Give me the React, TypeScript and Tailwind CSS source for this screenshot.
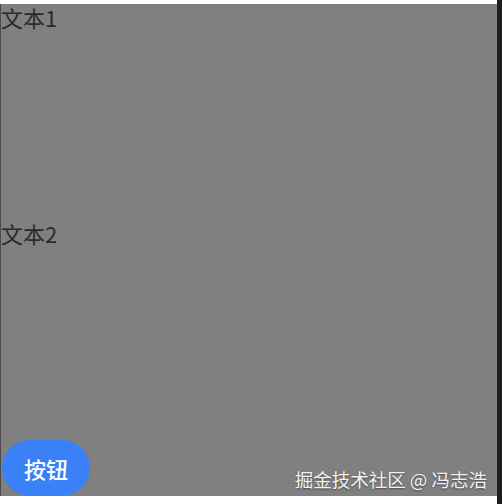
export default function App() {
  return (
    <div
      className="flex h-[504px] w-[502px] bg-white"
      style={{ fontFamily: '"Noto Sans CJK SC", "Noto Sans", sans-serif' }}
    >
      <div className="flex flex-1 flex-col">
        <div className="h-[4px] bg-white" />
        <div className="flex h-[492px]">
          <div className="w-[1px] bg-[#4a4a4a]" />
          <div className="relative flex flex-1 flex-col bg-[#808080]">
            <p className="text-[22px] leading-[26px] text-[#2a2a2a]">文本1</p>
            <p className="mt-[190px] text-[22px] leading-[26px] text-[#2a2a2a]">文本2</p>
            <div className="mt-auto flex items-end justify-between pl-[1px] pr-[10px]">
              <button className="flex h-[56px] w-[88px] items-center justify-center rounded-full bg-[#3a80f6] text-[22px] font-medium text-white">
                按钮
              </button>
              <span className="mb-[6px] text-[18.5px] leading-[22px] text-[#f2f2f2] [text-shadow:0_1px_2px_rgba(0,0,0,0.45)]">
                掘金技术社区 @ 冯志浩
              </span>
            </div>
          </div>
        </div>
        <div className="flex-1 bg-white" />
      </div>
      <div className="w-[5px] bg-[#1e1e1e]" />
    </div>
  )
}
